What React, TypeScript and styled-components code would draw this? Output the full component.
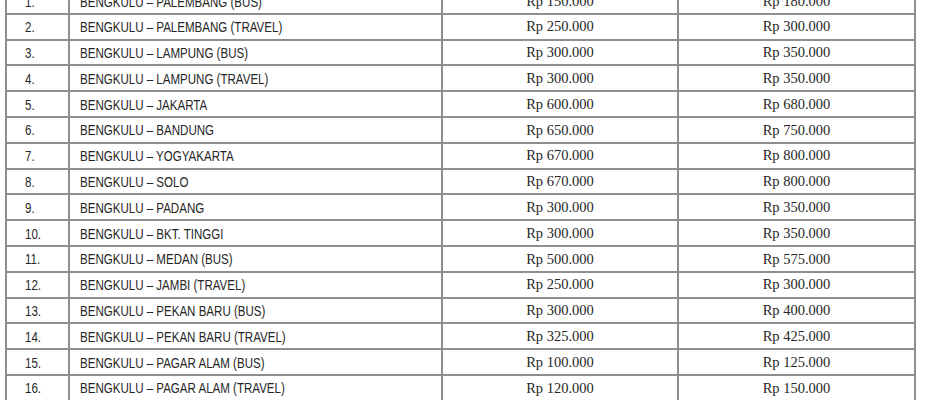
import React from 'react';
import styled, { createGlobalStyle } from 'styled-components';

interface Route {
  destination: string;
  priceLow: string;
  priceHigh: string;
}

const routes: Route[] = [
  { destination: 'PALEMBANG (BUS)', priceLow: '150.000', priceHigh: '180.000' },
  { destination: 'PALEMBANG (TRAVEL)', priceLow: '250.000', priceHigh: '300.000' },
  { destination: 'LAMPUNG (BUS)', priceLow: '300.000', priceHigh: '350.000' },
  { destination: 'LAMPUNG (TRAVEL)', priceLow: '300.000', priceHigh: '350.000' },
  { destination: 'JAKARTA', priceLow: '600.000', priceHigh: '680.000' },
  { destination: 'BANDUNG', priceLow: '650.000', priceHigh: '750.000' },
  { destination: 'YOGYAKARTA', priceLow: '670.000', priceHigh: '800.000' },
  { destination: 'SOLO', priceLow: '670.000', priceHigh: '800.000' },
  { destination: 'PADANG', priceLow: '300.000', priceHigh: '350.000' },
  { destination: 'BKT. TINGGI', priceLow: '300.000', priceHigh: '350.000' },
  { destination: 'MEDAN (BUS)', priceLow: '500.000', priceHigh: '575.000' },
  { destination: 'JAMBI (TRAVEL)', priceLow: '250.000', priceHigh: '300.000' },
  { destination: 'PEKAN BARU (BUS)', priceLow: '300.000', priceHigh: '400.000' },
  { destination: 'PEKAN BARU (TRAVEL)', priceLow: '325.000', priceHigh: '425.000' },
  { destination: 'PAGAR ALAM (BUS)', priceLow: '100.000', priceHigh: '125.000' },
  { destination: 'PAGAR ALAM (TRAVEL)', priceLow: '120.000', priceHigh: '150.000' },
];

const GlobalStyle = createGlobalStyle`
  html, body {
    margin: 0;
    padding: 0;
    background: #ffffff;
    overflow: hidden;
  }
`;

const Page = styled.div`
  height: 400px;
  overflow: hidden;
  padding: 0 0 0 5px;
`;

// the scan starts part-way through the first row
const PriceTable = styled.table`
  border-collapse: collapse;
  margin-top: -13px;
  table-layout: fixed;
  width: 910px;
  color: #262626;
`;

const Col = styled.col<{ $width: number }>`
  width: ${({ $width }) => $width}px;
`;

const Row = styled.tr`
  height: 25.8px;
`;

const Cell = styled.td`
  border: 2px solid #8e8e8e;
  padding: 2px 0 0 10px;
  font-family: 'Liberation Sans', Arial, sans-serif;
  font-size: 14.8px;
  line-height: 1;
  text-align: left;
  vertical-align: middle;
  white-space: nowrap;
`;

const NumberCell = styled(Cell)`
  padding-left: 18px;
`;

const PriceCell = styled(Cell)`
  padding: 0;
  font-family: 'Liberation Serif', 'Times New Roman', serif;
  font-size: 14.5px;
  text-align: center;
`;

// stands in for Arial Narrow, which is not installed
const Narrow = styled.span`
  display: inline-block;
  transform: scaleX(0.78);
  transform-origin: left center;
`;

export default function App() {
  return (
    <>
      <GlobalStyle />
      <Page>
        <PriceTable>
          <colgroup>
            <Col $width={63} />
            <Col $width={373} />
            <Col $width={236} />
            <Col $width={237} />
          </colgroup>
          <tbody>
            {routes.map((route, i) => (
              <Row key={route.destination}>
                <NumberCell>
                  <Narrow>{i + 1}.</Narrow>
                </NumberCell>
                <Cell>
                  <Narrow>BENGKULU – {route.destination}</Narrow>
                </Cell>
                <PriceCell>Rp {route.priceLow}</PriceCell>
                <PriceCell>Rp {route.priceHigh}</PriceCell>
              </Row>
            ))}
          </tbody>
        </PriceTable>
      </Page>
    </>
  );
}
